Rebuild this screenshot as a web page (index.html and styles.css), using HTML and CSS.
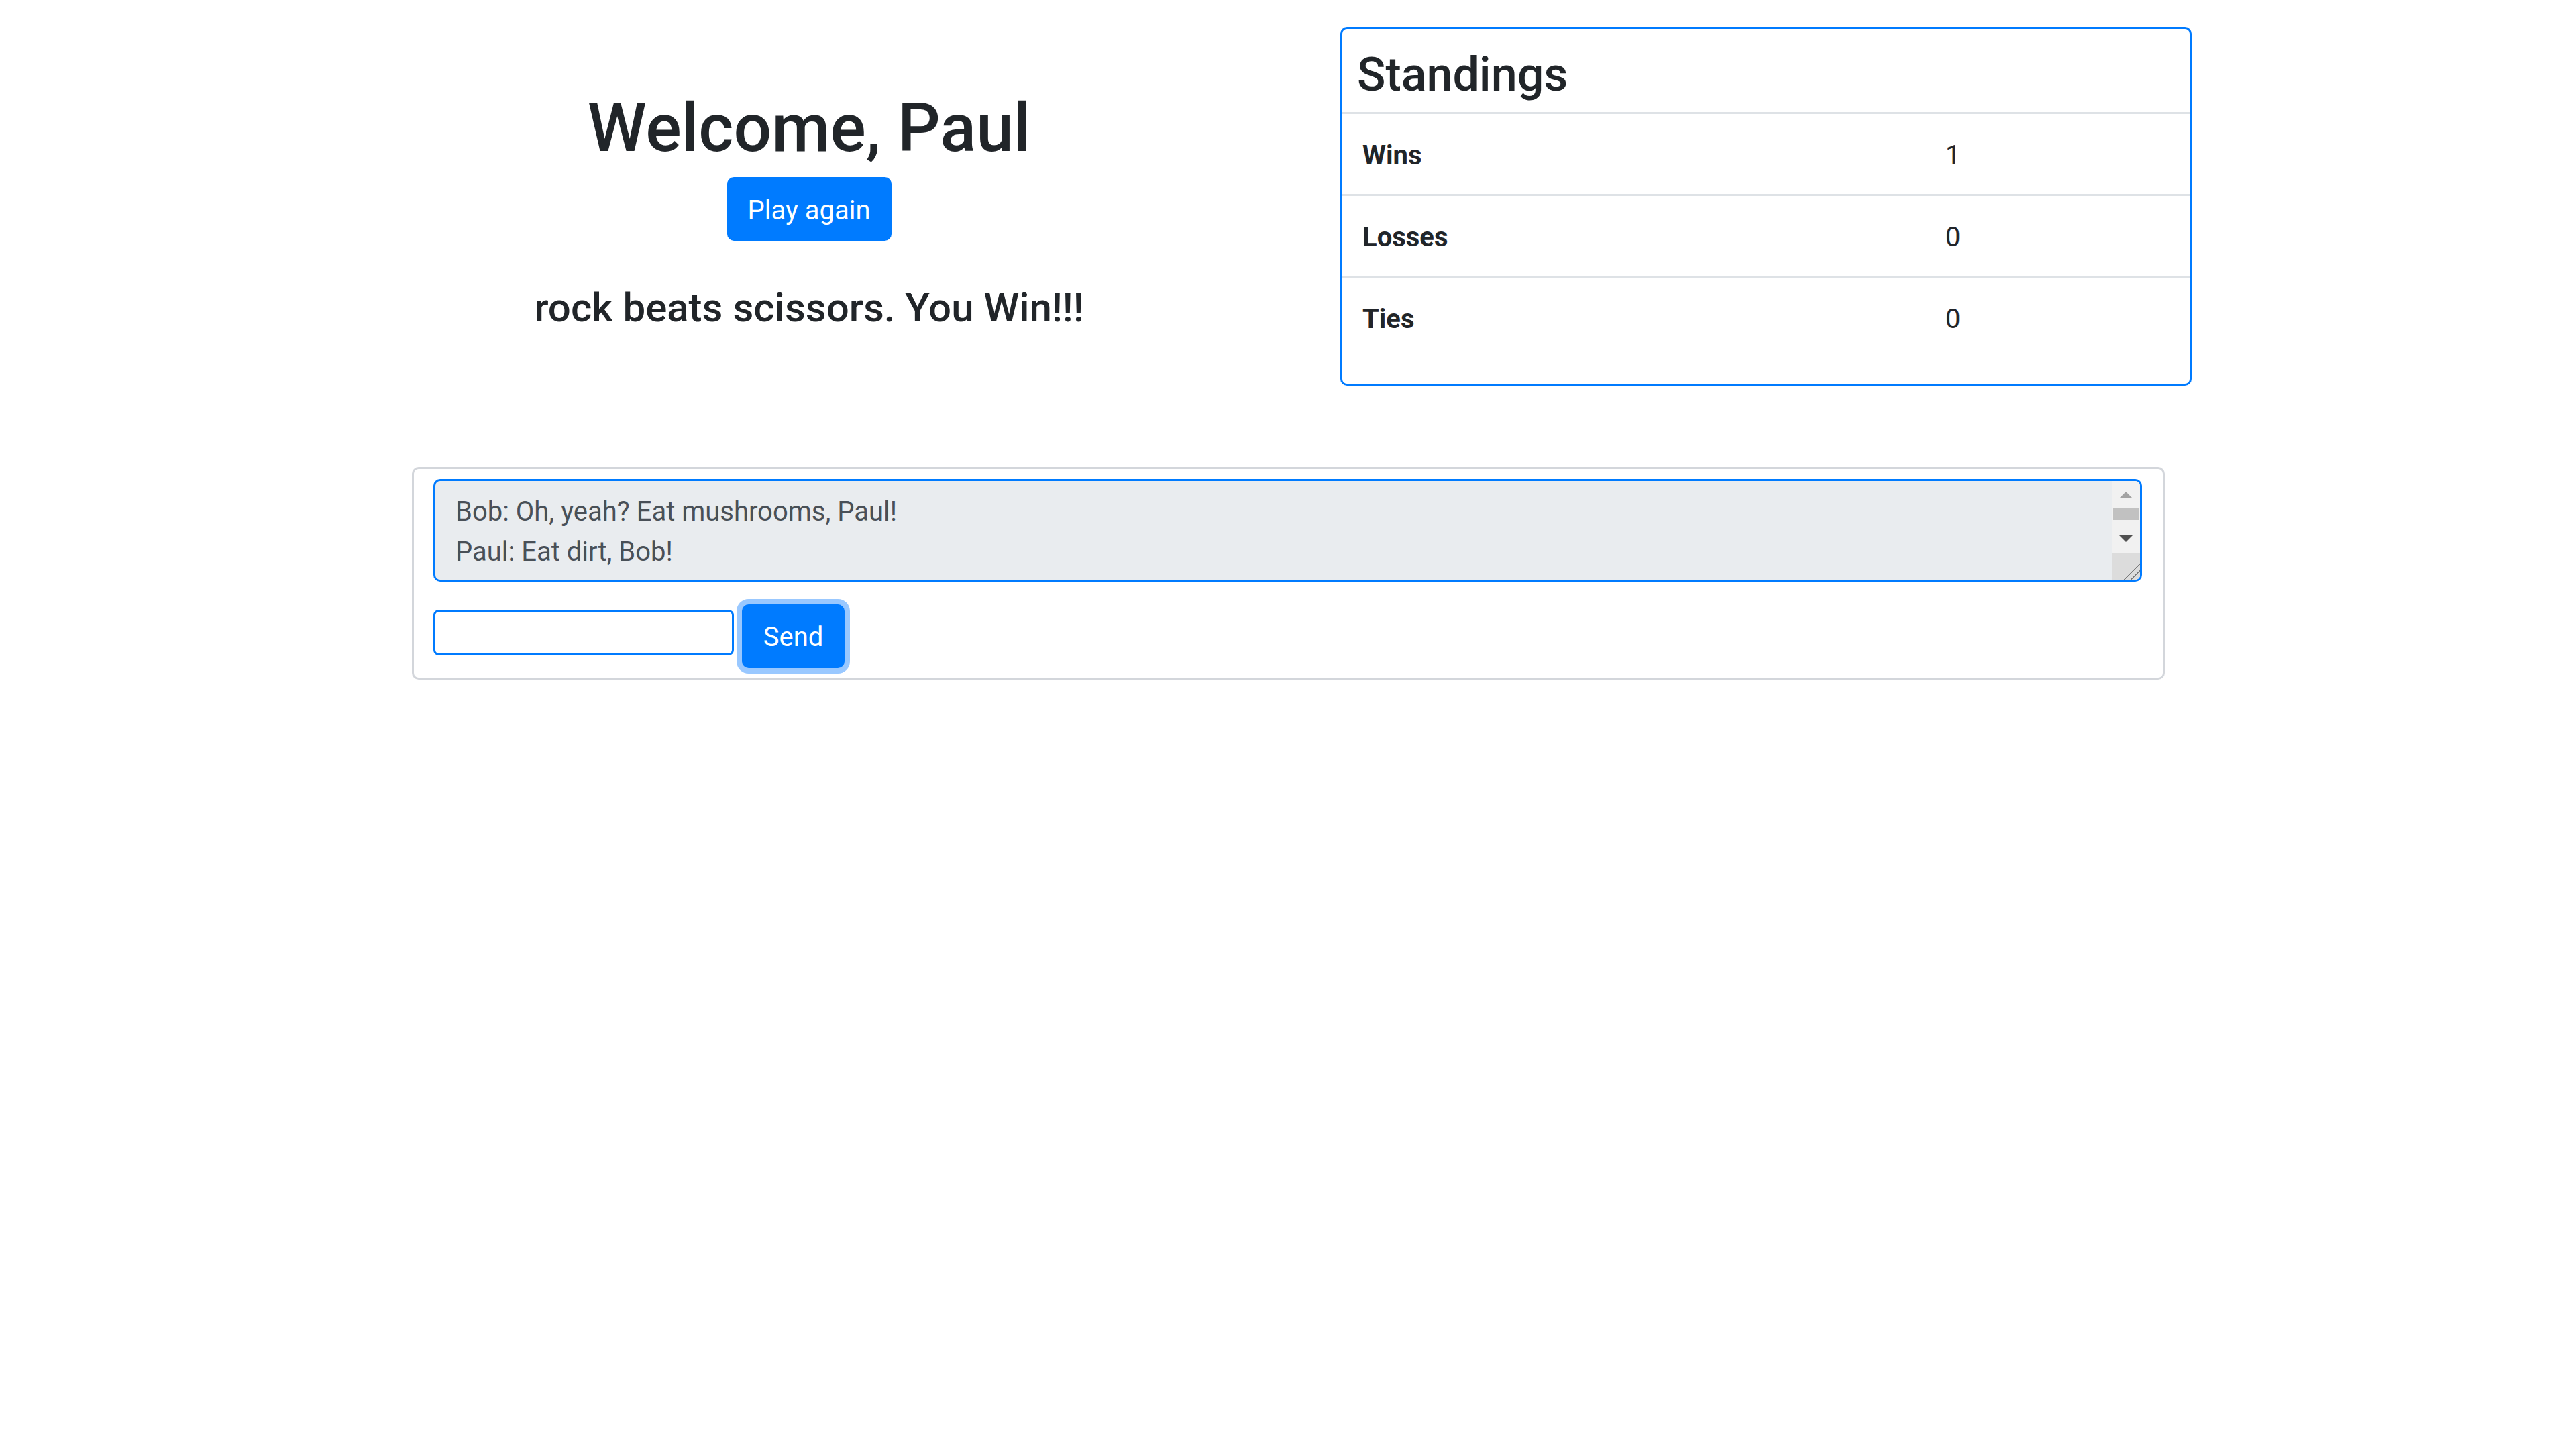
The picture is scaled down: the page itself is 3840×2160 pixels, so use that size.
FILE: index.html
```html
<!DOCTYPE html>
<html lang="en">
<head>
<meta charset="utf-8">
<title>Rock Paper Scissors</title>
<link rel="stylesheet" href="styles.css">
</head>
<body>
<div class="top">
  <div class="welcome">
    <h1 class="title">Welcome, Paul</h1>
    <button class="btn btn-play">Play again</button>
    <h4 class="result">rock beats scissors. You Win!!!</h4>
  </div>
  <div class="standings">
    <h3 class="standings-title">Standings</h3>
    <table class="table">
      <tr><th>Wins</th><td>1</td></tr>
      <tr><th>Losses</th><td>0</td></tr>
      <tr><th>Ties</th><td>0</td></tr>
    </table>
  </div>
</div>
<div class="chat">
  <div class="log">
    <div class="log-text">Bob: Oh, yeah? Eat mushrooms, Paul!<br>Paul: Eat dirt, Bob!</div>
    <div class="scrollbar">
      <div class="sb-track">
        <span class="sb-up"></span>
        <span class="sb-thumb"></span>
        <span class="sb-down"></span>
      </div>
      <div class="sb-corner"></div>
    </div>
  </div>
  <div class="compose">
    <input class="msg" type="text">
    <button class="btn btn-send">Send</button>
  </div>
</div>
</body>
</html>
```
FILE: styles.css
```css
html, body {
  margin: 0;
  padding: 0;
  background: #fff;
}
body {
  font-family: Roboto, "Open Sans", sans-serif;
  color: #212529;
  font-size: 40px;
  line-height: 60px;
}
.top {
  display: flex;
  align-items: flex-start;
  margin: 40px 0 0 495px;
  gap: 81px;
}
.welcome {
  width: 1422px;
  display: flex;
  flex-direction: column;
  align-items: center;
}
.title {
  margin: 91px 0 0;
  font-size: 100px;
  line-height: 120px;
  font-weight: 500;
}
.btn {
  font-family: inherit;
  font-size: 40px;
  line-height: 60px;
  color: #fff;
  background: #007bff;
  border: 3px solid #007bff;
  border-radius: 10px;
  padding: 14px 28px;
  cursor: pointer;
}
.btn-play {
  margin-top: 13px;
  height: 95px;
  width: 245px;
  padding: 4px 0 0;
}
.result {
  margin: 64px 0 0;
  font-size: 60px;
  line-height: 72px;
  font-weight: 500;
}
.standings {
  width: 1269px;
  height: 535px;
  box-sizing: border-box;
  border: 3px solid #007bff;
  border-radius: 10px;
}
.standings-title {
  margin: 0;
  padding: 28px 22px 16px;
  font-size: 70px;
  line-height: 80px;
  font-weight: 500;
}
.table {
  width: 100%;
  border-collapse: collapse;
}
.table th, .table td {
  border-top: 3px solid #dee2e6;
  padding: 32px 30px 27px;
  text-align: left;
  vertical-align: top;
  font-size: 40px;
  line-height: 60px;
}
.table th {
  width: 809px;
  font-weight: 700;
}
.chat {
  margin: 121px 0 0 614px;
  width: 2613px;
  height: 317px;
  box-sizing: border-box;
  border: 3px solid #d3d6db;
  border-radius: 10px;
  padding: 15px 31px 0 29px;
}
.log {
  display: flex;
  height: 153px;
  box-sizing: border-box;
  border: 3px solid #007bff;
  border-radius: 10px;
  background: #e9ecef;
  overflow: hidden;
}
.log-text {
  flex: 1;
  padding: 16px 30px;
  color: #495057;
}
.scrollbar {
  width: 42px;
  display: flex;
  flex-direction: column;
  background: #f1f1f1;
}
.sb-track {
  height: 108px;
  display: flex;
  flex-direction: column;
  align-items: center;
}
.sb-up, .sb-down {
  width: 0;
  height: 0;
  border-left: 10px solid transparent;
  border-right: 10px solid transparent;
}
.sb-up {
  margin-top: 16px;
  border-bottom: 10px solid #a3a3a3;
}
.sb-thumb {
  margin-top: 15px;
  width: 38px;
  height: 17px;
  background: #c1c1c1;
}
.sb-down {
  margin-top: 23px;
  border-top: 10px solid #505050;
}
.sb-corner {
  flex: 1;
  background:
    linear-gradient(135deg, transparent 0 70%, #7a7a7a 70% 72%, transparent 72% 82%, #7a7a7a 82% 84%, transparent 84%),
    #dcdcdc;
}
.compose {
  display: flex;
  align-items: flex-start;
  margin-top: 34px;
}
.msg {
  width: 448px;
  height: 68px;
  box-sizing: border-box;
  border: 3px solid #007bff;
  border-radius: 8px;
  margin: 8px 0 0;
  background: #fff;
  outline: none;
}
.btn-send {
  margin-left: 12px;
  width: 153px;
  height: 95px;
  padding: 2px 0 0;
  box-shadow: 0 0 0 8px #99c8ff;
}
```
